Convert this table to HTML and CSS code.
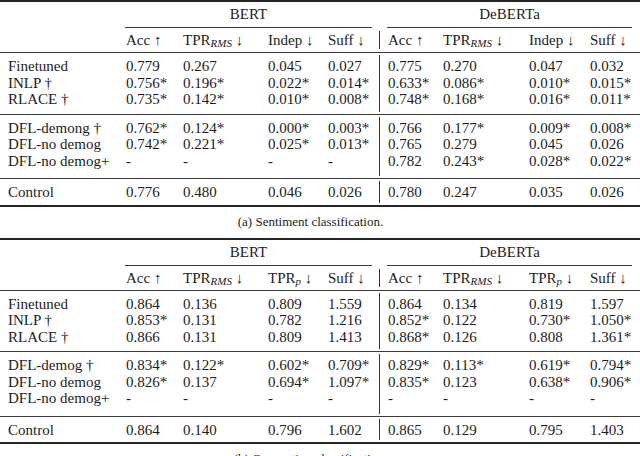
FILE: index.html
```html
<!DOCTYPE html>
<html>
<head>
<meta charset="utf-8">
<link rel="stylesheet" href="styles.css">
</head>
<body>
<div class="page">
  <table class="t">
    <colgroup>
      <col class="w0"><col class="w1"><col class="w2"><col class="w3"><col class="w4">
      <col class="w5"><col class="w6"><col class="w7"><col class="w8">
    </colgroup>
    <tr class="group">
      <td></td>
      <td colspan="4" class="g"><div class="cmid cmid-l">BERT</div></td>
      <td colspan="4" class="g"><div class="cmid cmid-r">DeBERTa</div></td>
    </tr>
    <tr class="head">
      <td></td>
      <td>Acc ↑</td>
      <td>TPR<sub>RMS</sub> ↓</td>
      <td>Indep ↓</td>
      <td>Suff ↓</td>
      <td class="hv"><div class="vl">Acc ↑</div></td>
      <td>TPR<sub>RMS</sub> ↓</td>
      <td>Indep ↓</td>
      <td>Suff ↓</td>
    </tr>
    <tr class="rule"><td colspan="9"></td></tr>
    <tr class="sp"><td colspan="9"></td></tr>
    <tr class="first"><td class="lab">Finetuned</td><td>0.779</td><td>0.267</td><td>0.045</td><td>0.027</td><td class="v">0.775</td><td>0.270</td><td>0.047</td><td>0.032</td></tr>
    <tr><td class="lab">INLP †</td><td>0.756*</td><td>0.196*</td><td>0.022*</td><td>0.014*</td><td class="v">0.633*</td><td>0.086*</td><td>0.010*</td><td>0.015*</td></tr>
    <tr class="last"><td class="lab">RLACE †</td><td>0.735*</td><td>0.142*</td><td>0.010*</td><td>0.008*</td><td class="v">0.748*</td><td>0.168*</td><td>0.016*</td><td>0.011*</td></tr>
    <tr class="sp"><td colspan="9"></td></tr>
    <tr class="rule"><td colspan="9"></td></tr>
    <tr class="sp"><td colspan="9"></td></tr>
    <tr class="first"><td class="lab">DFL-demong †</td><td>0.762*</td><td>0.124*</td><td>0.000*</td><td>0.003*</td><td class="v">0.766</td><td>0.177*</td><td>0.009*</td><td>0.008*</td></tr>
    <tr><td class="lab">DFL-no demog</td><td>0.742*</td><td>0.221*</td><td>0.025*</td><td>0.013*</td><td class="v">0.765</td><td>0.279</td><td>0.045</td><td>0.026</td></tr>
    <tr class="last tall"><td class="lab">DFL-no demog+</td><td>-</td><td>-</td><td>-</td><td>-</td><td class="v">0.782</td><td>0.243*</td><td>0.028*</td><td>0.022*</td></tr>
    <tr class="sp"><td colspan="9"></td></tr>
    <tr class="rule"><td colspan="9"></td></tr>
    <tr class="sp"><td colspan="9"></td></tr>
    <tr class="first end"><td class="lab">Control</td><td>0.776</td><td>0.480</td><td>0.046</td><td>0.026</td><td class="v">0.780</td><td>0.247</td><td>0.035</td><td>0.026</td></tr>
    <tr class="sp"><td colspan="9"></td></tr>
  </table>
  <p class="caption">(a) Sentiment classification.</p>

  <table class="t">
    <colgroup>
      <col class="w0"><col class="w1"><col class="w2"><col class="w3"><col class="w4">
      <col class="w5"><col class="w6"><col class="w7"><col class="w8">
    </colgroup>
    <tr class="group">
      <td></td>
      <td colspan="4" class="g"><div class="cmid cmid-l">BERT</div></td>
      <td colspan="4" class="g"><div class="cmid cmid-r">DeBERTa</div></td>
    </tr>
    <tr class="head">
      <td></td>
      <td>Acc ↑</td>
      <td>TPR<sub>RMS</sub> ↓</td>
      <td>TPR<sub>p</sub> ↓</td>
      <td>Suff ↓</td>
      <td class="hv"><div class="vl">Acc ↑</div></td>
      <td>TPR<sub>RMS</sub> ↓</td>
      <td>TPR<sub>p</sub> ↓</td>
      <td>Suff ↓</td>
    </tr>
    <tr class="rule"><td colspan="9"></td></tr>
    <tr class="sp"><td colspan="9"></td></tr>
    <tr class="first"><td class="lab">Finetuned</td><td>0.864</td><td>0.136</td><td>0.809</td><td>1.559</td><td class="v">0.864</td><td>0.134</td><td>0.819</td><td>1.597</td></tr>
    <tr><td class="lab">INLP †</td><td>0.853*</td><td>0.131</td><td>0.782</td><td>1.216</td><td class="v">0.852*</td><td>0.122</td><td>0.730*</td><td>1.050*</td></tr>
    <tr class="last"><td class="lab">RLACE †</td><td>0.866</td><td>0.131</td><td>0.809</td><td>1.413</td><td class="v">0.868*</td><td>0.126</td><td>0.808</td><td>1.361*</td></tr>
    <tr class="sp"><td colspan="9"></td></tr>
    <tr class="rule"><td colspan="9"></td></tr>
    <tr class="sp"><td colspan="9"></td></tr>
    <tr class="first"><td class="lab">DFL-demog †</td><td>0.834*</td><td>0.122*</td><td>0.602*</td><td>0.709*</td><td class="v">0.829*</td><td>0.113*</td><td>0.619*</td><td>0.794*</td></tr>
    <tr><td class="lab">DFL-no demog</td><td>0.826*</td><td>0.137</td><td>0.694*</td><td>1.097*</td><td class="v">0.835*</td><td>0.123</td><td>0.638*</td><td>0.906*</td></tr>
    <tr class="last tall"><td class="lab">DFL-no demog+</td><td>-</td><td>-</td><td>-</td><td>-</td><td class="v">-</td><td>-</td><td>-</td><td>-</td></tr>
    <tr class="sp"><td colspan="9"></td></tr>
    <tr class="rule"><td colspan="9"></td></tr>
    <tr class="sp"><td colspan="9"></td></tr>
    <tr class="first end"><td class="lab">Control</td><td>0.864</td><td>0.140</td><td>0.796</td><td>1.602</td><td class="v">0.865</td><td>0.129</td><td>0.795</td><td>1.403</td></tr>
    <tr class="sp"><td colspan="9"></td></tr>
  </table>
  <p class="caption">(b) Occupation classification.</p>
</div>
</body>
</html>
```

FILE: styles.css
```css
html, body {
  margin: 0;
  padding: 0;
  background: #ffffff;
}

body {
  font-family: "Liberation Serif", "Times New Roman", serif;
  font-size: 15px;
  color: #1c1c1c;
  width: 640px;
  height: 456px;
  overflow: hidden;
}

.page {
  display: flex;
  flex-direction: column;
}

.t {
  width: 640px;
  table-layout: fixed;
  border-collapse: separate;
  border-spacing: 0;
  border-top: 2px solid #262626;
  border-bottom: 2px solid #262626;
}

.w0 { width: 120px; }
.w1 { width: 57px; }
.w2 { width: 85px; }
.w3 { width: 60px; }
.w4 { width: 57px; }
.w5 { width: 58px; }
.w6 { width: 86px; }
.w7 { width: 61px; }
.w8 { width: 56px; }

.t td {
  padding: 0 0 0 6px;
  line-height: 16.5px;
  white-space: nowrap;
  vertical-align: top;
}

.t td.lab {
  padding-left: 8px;
}

.t td.v {
  border-left: 1px solid #333333;
  padding-left: 8px;
}

.t tr.first td {
  padding-top: 3px;
}

.t tr.last td {
  padding-bottom: 4px;
}

.t tr.tall td {
  padding-bottom: 7px;
}

.t tr.end td {
  padding-bottom: 2px;
}

.t tr.sp td {
  height: 2px;
  padding: 0;
  font-size: 0;
  line-height: 0;
}

.t tr.rule td {
  height: 0;
  padding: 0;
  font-size: 0;
  line-height: 0;
  border-top: 1px solid #3a3a3a;
}

/* group header with trimmed rule */
.t tr.group td {
  padding: 3px 0 0 0;
}

.cmid {
  line-height: 18px;
  padding-bottom: 4px;
  border-bottom: 1px solid #3a3a3a;
  text-align: center;
}

.cmid-l {
  margin: 0 7px 0 5px;
}

.cmid-r {
  margin: 0 8px 0 8px;
}

.t tr.head td {
  padding-top: 3px;
  padding-bottom: 3px;
  line-height: 18px;
}

.t tr.head td.hv {
  padding-left: 0;
}

.vl {
  border-left: 1px solid #333333;
  padding-left: 8px;
}

sub {
  font-style: italic;
  font-size: 11px;
  line-height: 0;
  vertical-align: -2px;
}

.caption {
  margin: 8px 0 9px 0;
  font-size: 13px;
  line-height: 14px;
  text-align: center;
  padding-right: 19px;
}
```
